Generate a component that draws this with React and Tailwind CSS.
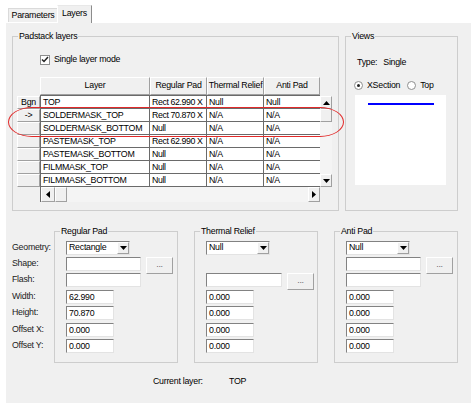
import React from 'react';

const rows = [
  { head: 'Bgn', layer: 'TOP', reg: 'Rect 62.990 X', th: 'Null', anti: 'Null' },
  { head: '->', layer: 'SOLDERMASK_TOP', reg: 'Rect 70.870 X', th: 'N/A', anti: 'N/A' },
  { head: '', layer: 'SOLDERMASK_BOTTOM', reg: 'Null', th: 'N/A', anti: 'N/A' },
  { head: '', layer: 'PASTEMASK_TOP', reg: 'Rect 62.990 X', th: 'N/A', anti: 'N/A' },
  { head: '', layer: 'PASTEMASK_BOTTOM', reg: 'Null', th: 'N/A', anti: 'N/A' },
  { head: '', layer: 'FILMMASK_TOP', reg: 'Null', th: 'N/A', anti: 'N/A' },
  { head: '', layer: 'FILMMASK_BOTTOM', reg: 'Null', th: 'N/A', anti: 'N/A' },
];

const raised = 'bg-[#f0f0f0] border border-t-white border-l-white border-r-[#a0a0a0] border-b-[#a0a0a0]';
const sunken = 'bg-white border border-t-[#828282] border-l-[#828282] border-r-[#e3e3e3] border-b-[#e3e3e3]';

const Tri = ({ dir }) => {
  const pts = { up: '0,4 3.5,0 7,4', down: '0,0 3.5,4 7,0', left: '4,0 0,3.5 4,7', right: '0,0 4,3.5 0,7' }[dir];
  const v = dir === 'up' || dir === 'down';
  return (
    <svg width={v ? 7 : 4} height={v ? 4 : 7}>
      <polygon points={pts} fill="#000" />
    </svg>
  );
};

function Group({ title, className = '', children }) {
  return (
    <fieldset className={`border border-[#cdcdcd] ${className}`}>
      <legend className="ml-[5px] px-[1px] leading-[11px]">{title}</legend>
      {children}
    </fieldset>
  );
}

function Field({ value = '', w }) {
  return <div className={`${sunken} h-[14px] ${w} pl-[2px] leading-[12px]`}>{value}</div>;
}

function Browse() {
  return <div className={`${raised} ml-[5px] w-[27px] h-[17px] flex items-center justify-center text-[#6d6d6d] leading-none pb-[2px]`}>...</div>;
}

function Combo({ value }) {
  return (
    <div className={`${sunken} h-[14px] w-[64px] flex items-center pl-[2px]`}>
      <span className="flex-1">{value}</span>
      <div className={`${raised} w-[12px] h-[12px] flex items-center justify-center`}>
        <Tri dir="down" />
      </div>
    </div>
  );
}

const rowH = ['h-[16px]', 'h-[16px]', 'h-[17px]', 'h-[16px]', 'h-[17px]', 'h-[16px]', 'h-[17px]'];
const labels = ['Geometry:', 'Shape:', 'Flash:', 'Width:', 'Height:', 'Offset X:', 'Offset Y:'];

function PadGroup({ title, geometry, shape, flashBrowse, shapeBrowse, nums }) {
  const cells = [
    <Combo value={geometry} />,
    shape ? (
      <>
        <Field w="w-[75px]" />
        {shapeBrowse && <Browse />}
      </>
    ) : null,
    <>
      <Field w={flashBrowse ? 'w-[76px]' : 'w-[75px]'} />
      {flashBrowse && <Browse />}
    </>,
    ...nums.map(n => <Field value={n} w="w-[48px]" />),
  ];
  return (
    <Group title={title} className="w-[124px] h-[137px]">
      <div className="pt-[4px] pl-[11px]">
        {cells.map((c, i) => (
          <div key={i} className={`${rowH[i]} flex items-start`}>{c}</div>
        ))}
      </div>
    </Group>
  );
}

export default function App() {
  return (
    <div className="relative w-[471px] h-[418px] bg-white overflow-hidden font-['Liberation_Sans',Arial,sans-serif] text-[8.8px] tracking-[-0.25px] text-black">
      {/* tab strip */}
      <div className="h-[22px] flex items-end pl-[8px]">
        <div className="h-[14px] w-[49px] bg-[#f0f0f0] border-t border-l border-t-[#dadada] border-l-[#dadada] flex items-center justify-center">Parameters</div>
        <div className="relative z-10 -mb-px h-[18px] w-[35px] bg-[#f0f0f0] border-t border-l border-r border-t-[#e8e8e8] border-l-white border-r-[#8c8c8c] flex items-center justify-center pb-[2px]">Layers</div>
      </div>

      <div className="ml-[5px] h-[381px] bg-[#f0f0f0] border-t border-l border-white">
        <div className="flex mt-[8px] ml-[6px]">
          <Group title="Padstack layers" className="w-[327px] h-[180px]">
            <div className="flex items-center mt-[12px] ml-[27px] h-[11px]">
              <div className="w-[10px] h-[10px] bg-white border border-[#8e8f8f] flex items-center justify-center">
                <svg width="8" height="7" viewBox="0 0 8 7">
                  <path d="M1 3.5 L3 5.5 L7 1" stroke="#222" strokeWidth="1.5" fill="none" />
                </svg>
              </div>
              <span className="ml-[4px]">Single layer mode</span>
            </div>

            <div className="mt-[12px] ml-[4px]">
              {/* column headers */}
              <div className="flex h-[18px]">
                <div className="w-[23px]" />
                {[['Layer', 'w-[110px]'], ['Regular Pad', 'w-[57px]'], ['Thermal Relief', 'w-[57px]'], ['Anti Pad', 'w-[56px]']].map(([t, w]) => (
                  <div key={t} className={`${raised} ${w} flex items-center justify-center whitespace-nowrap overflow-hidden`}>{t}</div>
                ))}
              </div>
              <div className="flex">
                <div className="w-[23px] pt-px">
                  {rows.map((r, i) => (
                    <div key={i} className={`${raised} h-[13px] flex items-center justify-center leading-none`}>{r.head}</div>
                  ))}
                </div>
                <div className="w-[280px] border-t border-l border-[#6a6a6a] bg-white">
                  {rows.map((r, i) => (
                    <div key={i} className="flex h-[13px] border-b border-[#6a6a6a] leading-[12px] whitespace-nowrap">
                      <div className="w-[109px] pl-[2px] border-r border-[#6a6a6a] overflow-hidden">{r.layer}</div>
                      <div className="w-[57px] pl-[2px] border-r border-[#6a6a6a] overflow-hidden tracking-[-0.4px]">{r.reg}</div>
                      <div className="w-[57px] pl-[2px] border-r border-[#6a6a6a] overflow-hidden">{r.th}</div>
                      <div className="w-[56px] pl-[2px] overflow-hidden">{r.anti}</div>
                    </div>
                  ))}
                </div>
                {/* vertical scrollbar */}
                <div className="w-[12px] mt-px h-[91px] bg-[#f4f4f4] flex flex-col">
                  <div className={`${raised} h-[13px] flex items-center justify-center`}><Tri dir="up" /></div>
                  <div className={`${raised} h-[13px]`} />
                  <div className="flex-1" />
                  <div className={`${raised} h-[13px] flex items-center justify-center`}><Tri dir="down" /></div>
                </div>
              </div>
              {/* horizontal scrollbar */}
              <div className="flex h-[15px]">
                <div className="w-[23px]" />
                <div className="w-[280px] bg-[#f4f4f4] flex border-l border-[#6a6a6a]">
                  <div className={`${raised} w-[14px] flex items-center justify-center`}><Tri dir="left" /></div>
                  <div className={`${raised} w-[12px]`} />
                  <div className="flex-1" />
                  <div className={`${raised} w-[12px] flex items-center justify-center`}><Tri dir="right" /></div>
                </div>
              </div>
            </div>
          </Group>

          <Group title="Views" className="ml-[6px] w-[113px] h-[180px]">
            <div className="mt-[15px] ml-[11px] flex h-[11px] items-center">
              <span>Type:</span>
              <span className="ml-[6px]">Single</span>
            </div>
            <div className="mt-[12px] ml-[8px] flex h-[11px] items-center">
              <div className="w-[9px] h-[9px] rounded-full border border-[#8e8f8f] bg-white flex items-center justify-center">
                <div className="w-[3px] h-[3px] rounded-full bg-[#222]" />
              </div>
              <span className="ml-[4px]">XSection</span>
              <div className="ml-[7px] w-[9px] h-[9px] rounded-full border border-[#8e8f8f] bg-white" />
              <span className="ml-[4px]">Top</span>
            </div>
            <div className="mt-[4px] ml-[9px] w-[91px] h-[90px] bg-white pt-[8px] pl-[13px]">
              <div className="w-[66px] h-[2px] bg-[#0000ff]" />
            </div>
          </Group>
        </div>

        <div className="flex mt-[15px] ml-[6px]">
          <div className="w-[42px] pt-[15px]">
            {labels.map((l, i) => (
              <div key={l} className={`${rowH[i]} leading-[13px] text-[#222]`}>{l}</div>
            ))}
          </div>
          <PadGroup title="Regular Pad" geometry="Rectangle" shape shapeBrowse nums={['62.990', '70.870', '0.000', '0.000']} />
          <div className="w-[16px]" />
          <PadGroup title="Thermal Relief" geometry="Null" flashBrowse nums={['0.000', '0.000', '0.000', '0.000']} />
          <div className="w-[16px]" />
          <PadGroup title="Anti Pad" geometry="Null" shape shapeBrowse nums={['0.000', '0.000', '0.000', '0.000']} />
        </div>

        <div className="flex mt-[13px] ml-[147px] h-[11px] items-center">
          <span className="w-[76px]">Current layer:</span>
          <span>TOP</span>
        </div>
      </div>

      {/* red annotation around the solder mask rows */}
      <div className="absolute left-[8px] top-[107px] w-[336px] h-[30px] border-[1.5px] border-[#e22a2a] rounded-[24px/15px] pointer-events-none" />
    </div>
  );
}
